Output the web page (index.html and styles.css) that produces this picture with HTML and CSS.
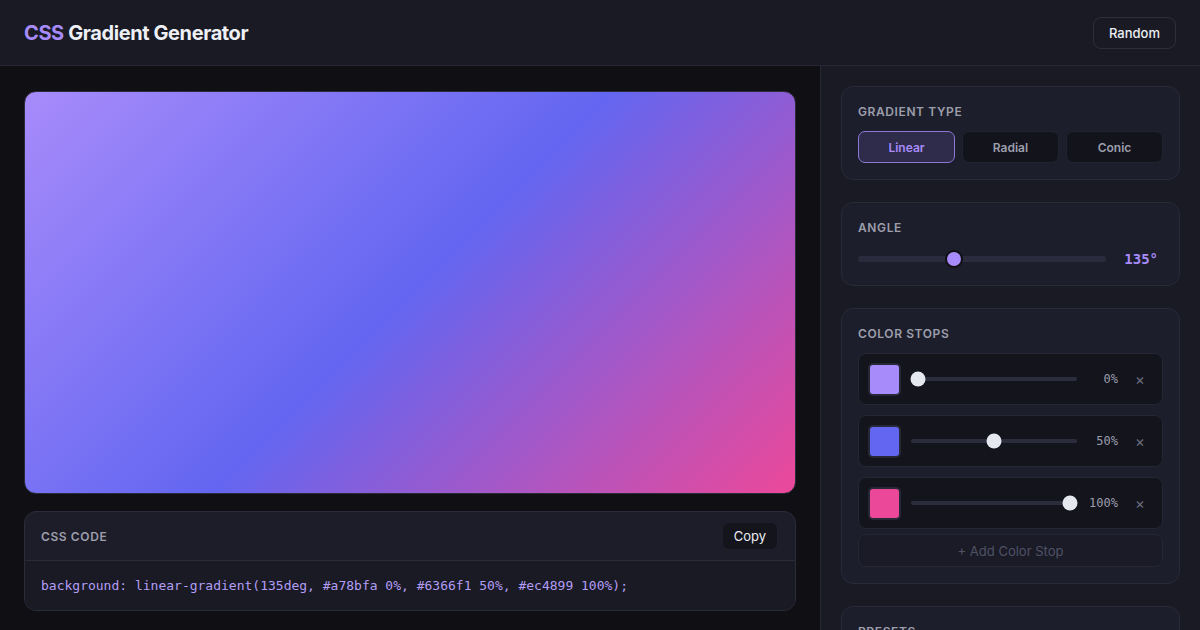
FILE: index.html
```html
<!DOCTYPE html>
<html lang="en">
<head>
<meta charset="utf-8">
<title>CSS Gradient Generator</title>
<link rel="stylesheet" href="styles.css">
</head>
<body>
<header class="topbar">
  <h1 class="title"><span class="accent">CSS</span> Gradient Generator</h1>
  <button class="btn">Random</button>
</header>
<main class="layout">
  <section class="workspace">
    <div class="preview"></div>
    <div class="code-card">
      <div class="code-head">
        <span class="label">CSS Code</span>
        <button class="btn btn-copy">Copy</button>
      </div>
      <div class="code-body">
        <code>background: linear-gradient(135deg, #a78bfa 0%, #6366f1 50%, #ec4899 100%);</code>
      </div>
    </div>
  </section>
  <aside class="sidebar">
    <div class="card">
      <div class="label">Gradient Type</div>
      <div class="segmented">
        <button class="seg active">Linear</button>
        <button class="seg">Radial</button>
        <button class="seg">Conic</button>
      </div>
    </div>
    <div class="card">
      <div class="label">Angle</div>
      <div class="angle-row">
        <div class="track angle-track"><span class="thumb thumb-purple" style="left:38.5%"></span></div>
        <span class="angle-value">135°</span>
      </div>
    </div>
    <div class="card">
      <div class="label">Color Stops</div>
      <div class="stops">
        <div class="stop">
          <span class="swatch" style="background:#a78bfa"></span>
          <div class="track stop-track"><span class="thumb thumb-white" style="left:4%"></span></div>
          <span class="pct">0%</span>
          <span class="remove">×</span>
        </div>
        <div class="stop">
          <span class="swatch" style="background:#6366f1"></span>
          <div class="track stop-track"><span class="thumb thumb-white" style="left:50%"></span></div>
          <span class="pct">50%</span>
          <span class="remove">×</span>
        </div>
        <div class="stop">
          <span class="swatch" style="background:#ec4899"></span>
          <div class="track stop-track"><span class="thumb thumb-white" style="left:96%"></span></div>
          <span class="pct">100%</span>
          <span class="remove">×</span>
        </div>
        <button class="add-stop">+ Add Color Stop</button>
      </div>
    </div>
    <div class="card">
      <div class="label">Presets</div>
    </div>
  </aside>
</main>
</body>
</html>
```

FILE: styles.css
```css
* { box-sizing: border-box; }
html, body { margin: 0; padding: 0; }
body {
  width: 1200px;
  height: 630px;
  overflow: hidden;
  background: #0f0f14;
  color: #e5e7ef;
  font-family: Inter, "Noto Sans", sans-serif;
}
button { font-family: inherit; cursor: pointer; }

.topbar {
  height: 66px;
  display: flex;
  align-items: center;
  justify-content: space-between;
  padding: 0 24px 0 24px;
  background: #191a24;
  border-bottom: 1px solid #262835;
}
.title {
  margin: 0;
  font-size: 20px;
  font-weight: 700;
  letter-spacing: -0.4px;
  color: #eef0f6;
}
.accent { color: #a78bfa; }

.btn {
  height: 32px;
  padding: 0 15px;
  border-radius: 8px;
  border: 1px solid #2c2e3c;
  background: #191a24;
  color: #eceef4;
  font-size: 13px;
  font-weight: 500;
}

.layout {
  display: flex;
  height: 564px;
}
.workspace {
  width: 820px;
  padding: 25px 24px 0 24px;
  display: flex;
  flex-direction: column;
  gap: 17px;
}
.preview {
  height: 403px;
  flex: none;
  border-radius: 12px;
  border: 1px solid #2a2c3a;
  background: linear-gradient(135deg, #a78bfa 0%, #6366f1 50%, #ec4899 100%);
}
.code-card {
  background: #1c1d29;
  border: 1px solid #2a2c3a;
  border-radius: 12px;
  overflow: hidden;
}
.code-head {
  height: 49px;
  display: flex;
  align-items: center;
  justify-content: space-between;
  padding: 0 16px;
  border-bottom: 1px solid #2a2c3a;
}
.btn-copy {
  height: 28px;
  padding: 0 11px;
  margin-right: 1px;
  border-radius: 7px;
  background: #14151c;
  border-color: #1e1f2a;
  font-size: 13px;
  font-weight: 400;
}
.code-body {
  height: 49px;
  display: flex;
  align-items: center;
  padding: 0 16px;
  background: #191a24;
}
.code-body code {
  font-family: "DejaVu Sans Mono", "Liberation Mono", monospace;
  font-size: 13px;
  color: #b39df5;
}

.label {
  font-size: 12px;
  font-weight: 600;
  text-transform: uppercase;
  letter-spacing: 0.6px;
  color: #9c9eac;
}

.sidebar {
  width: 380px;
  background: #191a24;
  border-left: 1px solid #262835;
  padding: 20px 20px 0 20px;
  display: flex;
  flex-direction: column;
  gap: 22px;
}
.card {
  background: #1d1e2b;
  border: 1px solid #282a38;
  border-radius: 12px;
  padding: 18px 16px 16px 16px;
  flex: none;
}
.card .label { margin-bottom: 12px; line-height: 14px; }

.segmented {
  display: grid;
  grid-template-columns: repeat(3, 1fr);
  gap: 7px;
}
.seg {
  height: 32px;
  border-radius: 7px;
  border: 1px solid #222330;
  background: #13141b;
  color: #9c9eac;
  font-size: 12px;
  font-weight: 600;
}
.seg.active {
  background: #2f2b4b;
  border-color: #8d78d6;
  color: #a78bfa;
}

.angle-row {
  display: flex;
  align-items: center;
  gap: 18px;
  height: 20px;
  margin-top: 14px;
}
.track {
  position: relative;
  flex: 1;
  border-radius: 3px;
  background: #2a2c3d;
}
.angle-track { height: 6px; }
.thumb {
  position: absolute;
  top: 50%;
  border-radius: 50%;
  transform: translate(-50%, -50%);
}
.thumb-purple {
  width: 18px;
  height: 18px;
  background: #a78bfa;
  border: 2px solid #0f0f14;
}
.thumb-white {
  width: 15px;
  height: 15px;
  background: #e6e8f0;
}
.angle-value {
  margin-right: 5px;
  font-family: "DejaVu Sans Mono", monospace;
  font-size: 14px;
  font-weight: 700;
  color: #a78bfa;
}

.stops {
  display: flex;
  flex-direction: column;
  gap: 10px;
}
.stop {
  height: 52px;
  display: flex;
  align-items: center;
  padding: 0 10px;
  background: #13141c;
  border: 1px solid #252735;
  border-radius: 8px;
}
.swatch {
  width: 33px;
  height: 33px;
  border-radius: 5px;
  border: 2px solid #262838;
  flex: none;
  margin-left: -1px;
  margin-right: 10px;
}
.stop-track { height: 4px; background: #2b2d3c; }
.pct {
  width: 40px;
  margin-left: 1px;
  text-align: right;
  font-family: "DejaVu Sans Mono", monospace;
  font-size: 12px;
  color: #9c9eac;
}
.remove {
  width: 24px;
  margin-left: 10px;
  text-align: center;
  color: #6a6d7e;
  font-size: 15px;
}
.add-stop {
  height: 33px;
  margin-top: -5px;
  border-radius: 8px;
  border: 1px solid #252735;
  background: #1a1b27;
  color: #4f5264;
  font-size: 13px;
}
```
